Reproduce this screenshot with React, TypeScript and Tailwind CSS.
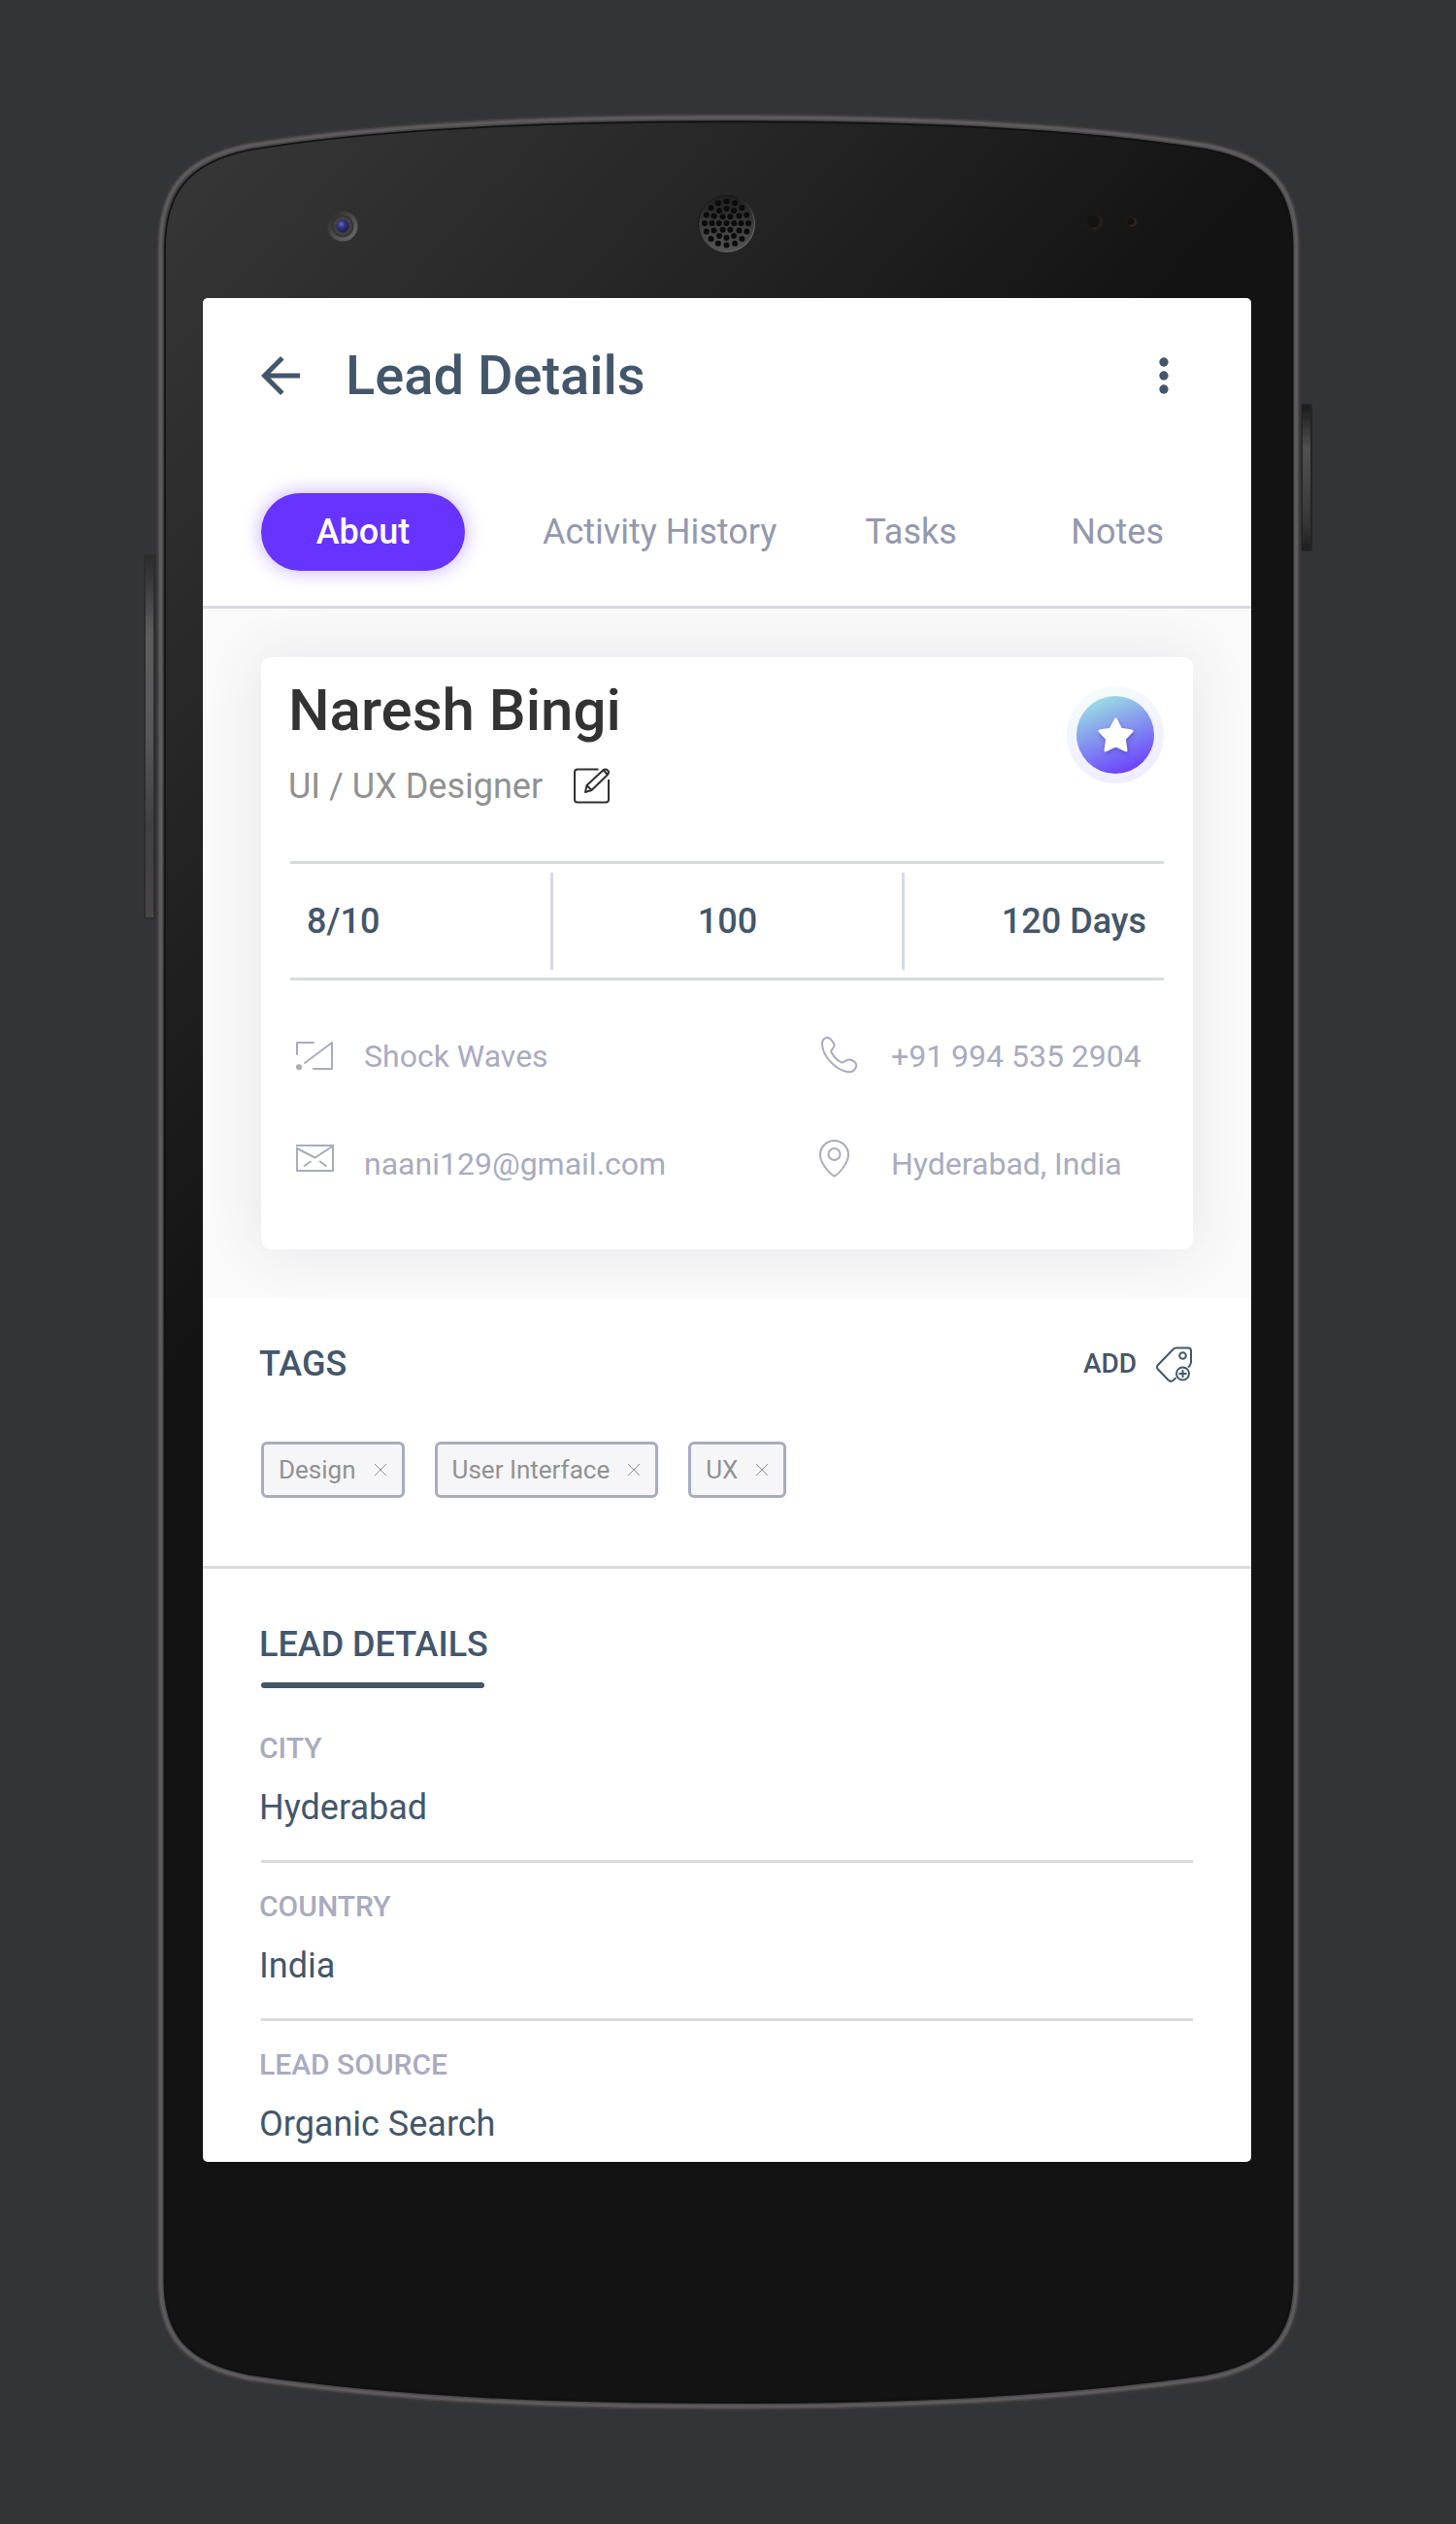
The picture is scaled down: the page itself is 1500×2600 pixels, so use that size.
import React from "react";

const stats = ["8/10", "100", "120 Days"];
const tags = ["Design", "User Interface", "UX"];
const details = [
  { label: "CITY", value: "Hyderabad" },
  { label: "COUNTRY", value: "India" },
  { label: "LEAD SOURCE", value: "Organic Search" },
];

function PhoneFrame() {
  const rings = [
    { count: 1, r: 0 },
    { count: 6, r: 7.7 },
    { count: 12, r: 15 },
    { count: 16, r: 22.5 },
  ];
  const holes = rings.flatMap(({ count, r }) =>
    Array.from({ length: count }, (_, i) => {
      const a = (i / count) * Math.PI * 2;
      return { x: 748.5 + r * Math.cos(a), y: 230 + r * Math.sin(a) };
    }),
  );
  const outline =
    "M165.500 255 C165.500 200 185 164 258 150 C400 127 580 121 750.500 121 C921 121 1101 127 1243 150 C1316 164 1335.500 200 1335.500 255 V2350 C1335.500 2405 1312 2437 1243 2450 C1085 2473 921 2479 750.500 2479 C580 2479 416 2473 258 2450 C189 2437 165.500 2405 165.500 2350 Z";
  return (
    <svg
      aria-hidden="true"
      className="absolute inset-0 size-full"
      viewBox="147 116 1206 2369"
      preserveAspectRatio="none"
      fill="none"
    >
      <defs>
        <linearGradient id="body" gradientUnits="userSpaceOnUse" x1="162" y1="130" x2="810" y2="726">
          <stop offset="0" stopColor="#383838" />
          <stop offset="0.5" stopColor="#272727" />
          <stop offset="1" stopColor="#131313" />
        </linearGradient>
        <linearGradient id="key" x1="0" y1="0" x2="0" y2="1">
          <stop offset="0" stopColor="#2c2b2d" />
          <stop offset="0.08" stopColor="#3c3b3d" />
          <stop offset="0.22" stopColor="#5e5e5f" />
          <stop offset="0.5" stopColor="#575658" />
          <stop offset="0.75" stopColor="#403f42" />
          <stop offset="1" stopColor="#474548" />
        </linearGradient>
        <linearGradient id="keyRight" x1="0" y1="0" x2="0" y2="1">
          <stop offset="0" stopColor="#1c1c1c" />
          <stop offset="0.1" stopColor="#2c2c2c" />
          <stop offset="0.3" stopColor="#505051" />
          <stop offset="0.8" stopColor="#373737" />
          <stop offset="1" stopColor="#1f1f1f" />
        </linearGradient>
        <linearGradient id="speaker" x1="0" y1="0" x2="0" y2="1">
          <stop offset="0" stopColor="#1d1d1d" />
          <stop offset="0.5" stopColor="#3a3a3a" />
          <stop offset="1" stopColor="#555555" />
        </linearGradient>
        <linearGradient id="speakerRim" x1="0" y1="0" x2="1" y2="1">
          <stop offset="0.3" stopColor="#161616" />
          <stop offset="1" stopColor="#8a8a8a" />
        </linearGradient>
        <linearGradient id="cameraRim" x1="0" y1="0" x2="1" y2="1">
          <stop offset="0" stopColor="#262626" />
          <stop offset="1" stopColor="#707070" />
        </linearGradient>
        <radialGradient id="lens" cx="0.4" cy="0.35" r="0.7">
          <stop offset="0" stopColor="#6a6aa8" />
          <stop offset="0.4" stopColor="#32328c" />
          <stop offset="1" stopColor="#1c1c3a" />
        </radialGradient>
      </defs>

      <rect x="148" y="571" width="14" height="376" rx="2" fill="#2d2d2e" />
      <rect x="150" y="573" width="8" height="372" fill="url(#key)" />
      <rect x="1338" y="416" width="14" height="152" rx="2" fill="#242425" />
      <rect x="1342" y="418" width="8" height="148" fill="url(#keyRight)" />

      <path d={outline} stroke="#39373a" strokeWidth="10" />
      <path d={outline} fill="url(#body)" />
      <path d={outline} stroke="#4b494c" strokeWidth="6" />
      <path d={outline} stroke="#5d5b5e" strokeWidth="3" />
      <path
        d="M170 258 C170 204 188 168 260 154 C400 131 580 125.500 750.500 125.500 C921 125.500 1101 131 1241 154 C1313 168 1331 204 1331 258 V2348 C1331 2401 1310 2433 1241 2446 C1085 2468 921 2474.500 750.500 2474.500 C580 2474.500 416 2468 260 2446 C191 2433 170 2401 170 2348 Z"
        stroke="#111111"
        strokeWidth="1.500"
      />

      <circle cx="353" cy="233" r="15.500" fill="url(#cameraRim)" />
      <circle cx="353" cy="233" r="10.500" fill="#414141" stroke="#323232" strokeWidth="1.500" />
      <circle cx="353" cy="233" r="6.500" fill="url(#lens)" />

      <circle cx="748.500" cy="230.500" r="29" fill="url(#speaker)" stroke="url(#speakerRim)" strokeWidth="1" />
      {holes.map((h, i) => (
        <circle key={i} cx={h.x} cy={h.y} r="3" fill="#0b0b0b" />
      ))}

      <circle cx="1126" cy="228" r="12" fill="#1b1918" />
      <circle cx="1126" cy="228" r="6" fill="#141312" />
      <path d="M1132 223 A7 7 0 0 1 1125 235" stroke="#2a211d" strokeWidth="2" />
      <circle cx="1166" cy="228" r="9" fill="#191817" />
      <circle cx="1165" cy="228" r="3" fill="#141312" />
      <path d="M1168 225 A4 4 0 0 1 1164 232" stroke="#302723" strokeWidth="2" />
    </svg>
  );
}

function CompanyIcon() {
  return (
    <svg viewBox="0 0 48 48" className="size-12 shrink-0" fill="none" stroke="currentColor" strokeWidth="2" aria-hidden="true">
      <path d="M22 10 H5 V22 M13 31 L41 10 V37 H22" strokeLinecap="round" strokeLinejoin="round" />
      <circle cx="7" cy="35.300" r="3" fill="currentColor" stroke="none" />
    </svg>
  );
}

function MailIcon() {
  return (
    <svg viewBox="0 0 48 48" className="size-12 shrink-0" fill="none" stroke="currentColor" strokeWidth="2" aria-hidden="true">
      <path d="M4 5 H42 V31 H5 V8 L23.500 17.500 L42 5.500" />
      <path d="M12 26.500 L19.500 21 M28 21 L35.500 26.500" />
    </svg>
  );
}

function PhoneIcon() {
  return (
    <svg viewBox="0 0 48 48" className="size-12 shrink-0" fill="none" stroke="currentColor" strokeWidth="2" aria-hidden="true">
      <path
        d="M3 12 C2.500 7 6.500 4.200 9.500 5 C11.500 5.700 14.500 9.500 15.600 12.500 C16 15.500 11.800 16.500 12.300 19.500 C14 23.500 18.500 28.500 22.500 30.200 C26 31.500 27 27 31.500 27.500 C35.500 28.500 38.500 31 38.300 34 C37.500 38 34 40.800 29.500 40.200 C17 38 4 25 3 12 Z"
        strokeLinejoin="round"
      />
    </svg>
  );
}

function PinIcon() {
  return (
    <svg viewBox="0 0 48 48" className="size-12 shrink-0 overflow-visible" fill="none" stroke="currentColor" strokeWidth="2" aria-hidden="true">
      <path d="M15.500 36.500 C12 35 1 24 1 14.500 A14.500 14.500 0 0 1 30 14.500 C30 24 19 35 15.500 36.500 Z" />
      <circle cx="15.500" cy="14" r="6" />
    </svg>
  );
}

const contacts = [
  { Icon: CompanyIcon, text: "Shock Waves" },
  { Icon: PhoneIcon, text: "+91 994 535 2904", href: "tel:+919945352904" },
  { Icon: MailIcon, text: "naani129@gmail.com", href: "mailto:naani129@gmail.com" },
  { Icon: PinIcon, text: "Hyderabad, India" },
];

export default function App() {
  return (
    <div className="min-h-screen bg-[#333437] px-[147px] pt-[116px] pb-[115px] font-['Roboto',sans-serif]">
      <div className="relative mx-auto w-full max-w-[1206px] pt-[191px] pr-16 pb-[258px] pl-[62px]">
        <PhoneFrame />

        <main className="relative overflow-hidden rounded-[5px] bg-white text-[#44566a]">
          <header className="flex h-40 items-center pr-[62px] pl-[50px]">
            <button type="button" aria-label="Back">
              <svg viewBox="0 0 24 24" className="size-[60px]" fill="currentColor" aria-hidden="true">
                <path d="M20 11H7.830l5.590-5.590L12 4l-8 8 8 8 1.410-1.410L7.830 13H20v-2z" />
              </svg>
            </button>
            <h1 className="ml-[37px] text-[56px] leading-[64px] font-medium">Lead Details</h1>
            <button type="button" aria-label="More options" className="ml-auto">
              <svg viewBox="0 0 24 24" className="size-14" fill="currentColor" aria-hidden="true">
                <circle cx="12" cy="6" r="2" />
                <circle cx="12" cy="12" r="2" />
                <circle cx="12" cy="18" r="2" />
              </svg>
            </button>
          </header>

          <nav className="flex items-center border-b-3 border-[#d6dae1] pt-[41px] pr-[90px] pb-9 pl-[60px] text-[36px] leading-[50px] text-[#9398ae]">
            <button
              type="button"
              aria-current="page"
              className="h-20 w-[210px] rounded-full bg-[#6633ff] font-medium text-white shadow-[0_0_20px_rgba(102,51,255,0.4)]"
            >
              About
            </button>
            <button type="button" className="ml-20">Activity History</button>
            <button type="button" className="ml-[91px]">Tasks</button>
            <button type="button" className="ml-auto">Notes</button>
          </nav>

          <section className="overflow-hidden bg-[#fafafa] px-[60px] py-[50px]">
            <div className="rounded-[10px] bg-white px-[30px] pt-5 pb-16 shadow-[0_0_60px_rgba(67,67,100,0.11)]">
              <div className="flex items-start justify-between">
                <div className="-ml-[2px]">
                  <h2 className="text-[60px] leading-[70px] font-medium text-[#333333]">Naresh Bingi</h2>
                  <div className="mt-[21px] flex items-center">
                    <p className="text-[36px] leading-[44px] text-[#919191]">UI / UX Designer</p>
                    <button type="button" aria-label="Edit" className="ml-[30px] text-[#2f2f2f]">
                      <svg viewBox="0 0 40 40" className="size-10" fill="none" stroke="currentColor" strokeWidth="2" strokeLinejoin="round" aria-hidden="true">
                        <path d="M27.500 2.500 H6 Q3 2.500 3 5.500 V33.500 Q3 36.500 6 36.500 H35 Q38 36.500 38 33.500 V13" />
                        <path d="M14 26 L15.500 19 L32.500 3.200 Q35 1.700 37 3.500 Q39 5.500 37 8 L20.500 24 Z M15.500 19 L20.500 24 M32.500 3.200 L37 8" />
                      </svg>
                    </button>
                  </div>
                </div>
                <button type="button" aria-label="Favourite" className="mt-2.5">
                  <svg viewBox="0 0 100 100" className="size-[100px]" aria-hidden="true">
                    <defs>
                      <linearGradient id="badge" x1="0.300" y1="0" x2="0.700" y2="1">
                        <stop offset="0" stopColor="#9be1e2" />
                        <stop offset="1" stopColor="#6a3cff" />
                      </linearGradient>
                    </defs>
                    <circle cx="50" cy="50" r="50" fill="url(#badge)" opacity="0.1" />
                    <circle cx="50" cy="50" r="40" fill="url(#badge)" />
                    <path
                      d="M50.500 34 L55.800 44.300 L67 46 L59.300 54.300 L61 66 L50.500 61 L40 66 L41.700 54.300 L34 46 L45.200 44.300 Z"
                      className="drop-shadow-[1px_2px_2px_rgba(40,30,120,0.35)]"
                      fill="#ffffff"
                      stroke="#ffffff"
                      strokeWidth="3"
                      strokeLinejoin="round"
                    />
                  </svg>
                </button>
              </div>

              <ul className="mt-[55px] grid h-[123px] grid-cols-[271px_1fr_270px] items-center border-y-3 border-[#d6dae1] text-[36px] font-medium">
                {stats.map((s) => (
                  <li
                    key={s}
                    className="flex h-[100px] items-center justify-center border-[#d6dae1] first:justify-start first:border-r-3 first:pl-[17px] last:justify-end last:border-l-3 last:pr-[18px]"
                  >
                    {s}
                  </li>
                ))}
              </ul>

              <ul className="mt-[54px] ml-[2px] grid grid-cols-[543fr_355fr] gap-y-[63px] text-[32px] leading-[48px] text-[#a9abbf]">
                {contacts.map(({ Icon, text, href }) => (
                  <li key={text} className="flex items-center gap-[26px] whitespace-nowrap">
                    <Icon />
                    {href ? <a href={href}>{text}</a> : <span>{text}</span>}
                  </li>
                ))}
              </ul>
            </div>
          </section>

          <section className="border-b-3 border-[#dadbdd] px-[60px] pt-11 pb-[70px]">
            <div className="-ml-[2px] flex items-center justify-between">
              <h2 className="text-[36px] leading-[48px] font-medium">TAGS</h2>
              <button type="button" className="flex items-center gap-[18px] text-[28px] leading-[36px] font-medium">
                ADD
                <svg viewBox="0 0 40 40" className="size-10" fill="none" stroke="currentColor" strokeWidth="2" strokeLinecap="round" aria-hidden="true">
                  <path d="M35.500 23 Q38 21 38 18 V6.500 Q38 3.500 35 3.500 H23 Q21 3.500 19.500 5 L4 21 Q2 23.200 4 25.500 L14.500 36.500 Q17 39 19.500 37 L22 34.800" />
                  <circle cx="29.500" cy="11.500" r="3.300" />
                  <circle cx="29.500" cy="30" r="6.500" />
                  <path d="M29.500 26.700 V33.300 M26.200 30 H32.800" />
                </svg>
              </button>
            </div>
            <ul className="mt-14 flex gap-[31px]">
              {tags.map((t) => (
                <li
                  key={t}
                  className="flex h-[58px] items-center gap-[19px] rounded-[6px] border-3 border-[#a9abbf] bg-[#f6f6f9] pr-4 pl-[15px] text-[26px] text-[#919191]"
                >
                  {t}
                  <button type="button" aria-label={"Remove " + t}>
                    <svg viewBox="0 0 12 12" className="size-3" stroke="currentColor" strokeWidth="1" aria-hidden="true">
                      <path d="M0 0 L12 12 M12 0 L0 12" />
                    </svg>
                  </button>
                </li>
              ))}
            </ul>
          </section>

          <section className="px-[60px] pt-[54px]">
            <h2 className="-ml-[2px] text-[36px] leading-[48px] font-medium">LEAD DETAILS</h2>
            <div className="mt-[15px] mb-[17px] h-1.5 w-[230px] rounded-full bg-[#435767]" />
            <dl>
              {details.map((d) => (
                <div key={d.label} className="border-b-3 border-[#dadbdd] pt-[27px] pb-[30px] last:border-b-0 last:pb-[15px]">
                  <dt className="-ml-[2px] text-[30px] leading-[36px] font-medium text-[#a9abbf]">{d.label}</dt>
                  <dd className="mt-[19px] -ml-[2px] text-[36px] leading-[48px]">{d.value}</dd>
                </div>
              ))}
            </dl>
          </section>
        </main>
      </div>
    </div>
  );
}
